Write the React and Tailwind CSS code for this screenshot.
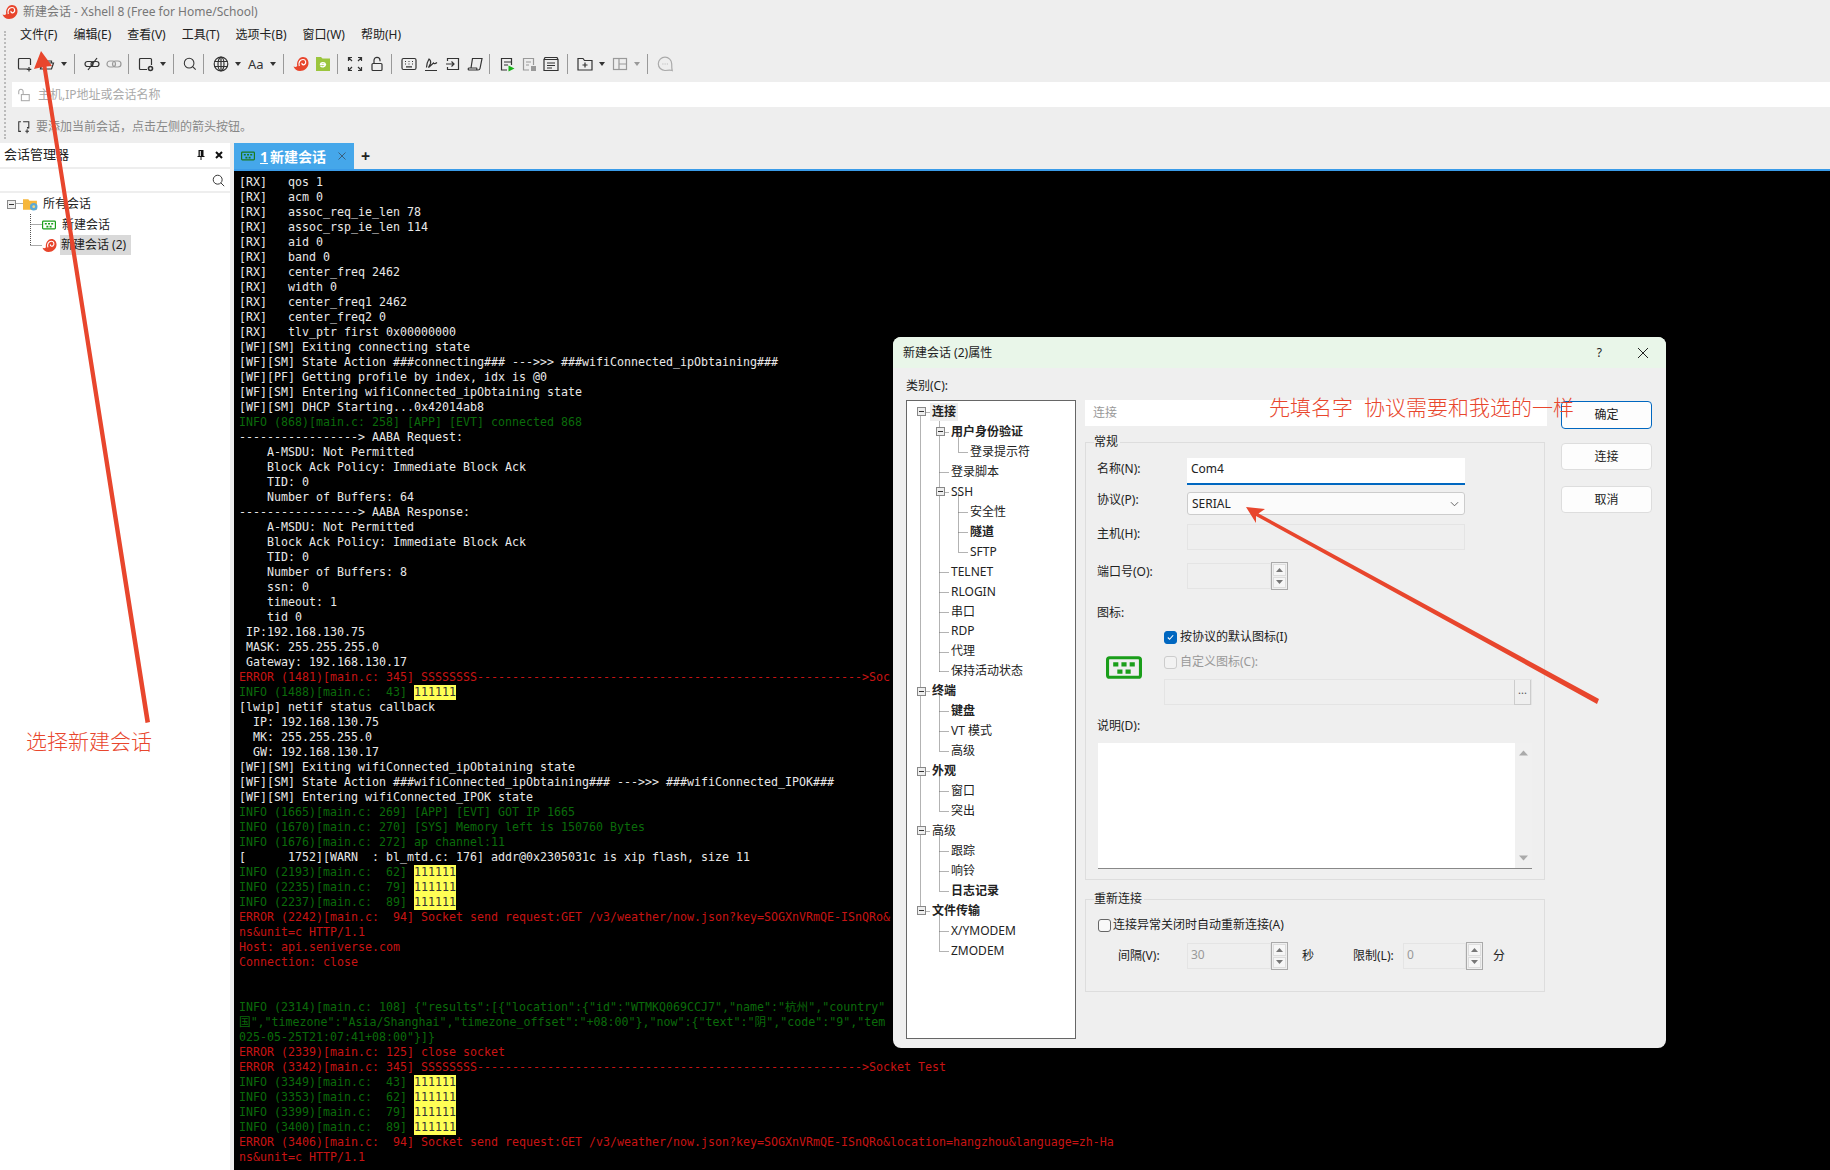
const S = ({ children, className = 'w-4 h-4' }) => (
  <svg viewBox="0 0 16 16" fill="none" stroke="#333" strokeWidth="1.2" className={className}>
    {children}
  </svg>
);

function Snail({ className = 'w-4 h-4' }) {
  return (
    <svg viewBox="0 0 16 16" className={className}>
      <path d="M.5 10.500c1.800.8 3 .4 3.700-.6C3.400 5.800 6 1 10 1c3.600 0 5.500 2.800 5.500 6 0 4.600-4 8-8.500 8-3.200 0-5.500-1.800-6.500-4.500z" fill="#e8452c" />
      <path d="M6.300 10C5 6.500 7.200 3.500 10 3.500c2.800 0 3.500 3.300 1.800 4.800-1.300 1.100-3.300.3-2.800-1.500" fill="none" stroke="#fff" strokeWidth="1.200" />
    </svg>
  );
}

function SessionIcon({ className = 'w-[14px] h-[10px]', color = '#1a9e1a' }) {
  return (
    <svg viewBox="0 0 35 22" className={className}>
      <rect x="1.500" y="1.500" width="32" height="19" rx="2" fill="none" stroke={color} strokeWidth="3" />
      <path d="M7 6h5v4H7zM15 6h5v4h-5zM23 6h5v4h-5zM11 13h5v4h-5zM19 13h5v4h-5z" fill={color} />
    </svg>
  );
}

const Caret = ({ muted }) => (
  <span className="w-[13px] flex">
    <svg viewBox="0 0 6 4" className="w-[6px] h-[4px]">
      <path d="M0 0h6L3 4z" fill={muted ? '#999' : '#333'} />
    </svg>
  </span>
);
const Sep = () => <span className="w-px h-5 mr-[9px] bg-[#999]" />;
const Slot = ({ children, className = 'w-[22px]' }) => <span className={`flex ${className}`}>{children}</span>;

function Toolbar() {
  return (
    <div className="h-[34px] flex items-center pl-[5px]">
      <Slot><S><path d="M11 13H2.500a1 1 0 0 1-1-1V3.500a1 1 0 0 1 1-1h10a1 1 0 0 1 1 1V9M12 11v4.500M9.800 13.300h4.500" /></S></Slot>
      <Slot><S><path d="M1.500 13V3.500h4l1.500 1.500h5.500v2M1.500 13l2-6h11l-2 6z" /></S></Slot>
      <Caret />
      <Sep />
      <Slot><S><rect x="1" y="5.500" width="8" height="5" rx="2.500" /><rect x="7" y="5.500" width="8" height="5" rx="2.500" /><path d="M4 14 13 2" /></S></Slot>
      <Slot><S><g stroke="#999"><rect x="1" y="5" width="8.500" height="6" rx="3" /><rect x="6.500" y="5" width="8.500" height="6" rx="3" /></g></S></Slot>
      <Sep />
      <Slot><S><path d="M9 13.500H2.500a1 1 0 0 1-1-1V3.500a1 1 0 0 1 1-1h10a1 1 0 0 1 1 1V9" /><circle cx="12.500" cy="12.500" r="2" strokeWidth="1.600" /></S></Slot>
      <Caret />
      <Sep />
      <Slot className="w-[20px]"><S className="w-[14px] h-[14px]"><circle cx="7" cy="7" r="5.500" /><path d="m11 11 3.500 3.500" /></S></Slot>
      <Sep />
      <Slot><S><circle cx="8" cy="8" r="6.800" /><ellipse cx="8" cy="8" rx="3" ry="6.800" /><path d="M1.500 5.500h13M1.500 10.500h13M8 1v14" /></S></Slot>
      <Caret />
      <Slot><span className="text-[13px] leading-none text-[#333]">Aa</span></Slot>
      <Caret />
      <Sep />
      <Slot><Snail /></Slot>
      <Slot>
        <svg viewBox="0 0 16 16" className="w-4 h-4">
          <path d="M1 1h5l1.500 1.500H15V15H1z" fill="#9bc53d" />
          <path d="M11 8.500H5.500c.3-2.500 4.500-2.500 5 0-.5 2.600-3.500 3-5 1.500" fill="none" stroke="#fff" strokeWidth="1.400" />
        </svg>
      </Slot>
      <Sep />
      <Slot><S><path d="M1.500 5V1.500H5M11 1.500h3.500V5M1.500 11v3.500H5M14.500 11v3.500H11M2 2l3 3M14 2l-3 3M2 14l3-3M14 14l-3-3" /></S></Slot>
      <Slot><S><rect x="3" y="7.500" width="10" height="7" rx="1" /><path d="M5 7.500V4.300a3 3 0 0 1 6 0v1" /></S></Slot>
      <Sep />
      <Slot><S><rect x="1" y="2.500" width="14" height="11" rx="1.500" /><path d="M4 5.500h1M7.500 5.500h1M11 5.500h1M4 8h1M7.500 8h1M11 8h1M5 10.800h6" /></S></Slot>
      <Slot><S><path d="M2 14.500h12M3.500 11.500c0-2 1-6 2.500-8.500 1.500 1 2 2.500 1.500 4.500l-2 4 5-4.500c.5 1 1.500 1 3.500-.5" /></S></Slot>
      <Slot><S><path d="M2.500 5V2.500h11v11h-11V11M1 8h8M6.500 5.500 9 8l-2.500 2.500" /></S></Slot>
      <Slot><S><path d="M4 12 5.500 2.500h9.500L13 12.500c-.2 1-1 1.500-2 1.500H2c-1 0-1.200-1.700 0-2h7.500c.5 0 .5 1.300 0 2M11.500 5.500" /></S></Slot>
      <Sep />
      <Slot>
        <S>
          <path d="M8 14H2.500V2.500h10V9M5 6h7M5 9h4" />
          <path d="M9.500 9.500v6l6-3z" fill="#19b319" stroke="none" />
        </S>
      </Slot>
      <Slot>
        <S>
          <g stroke="#999"><path d="M8 14H2.500V2.500h10V9M5 6h5M5 9h3" /></g>
          <rect x="10" y="10" width="5" height="5" fill="#999" stroke="none" />
        </S>
      </Slot>
      <Slot className="w-[24px]"><S><path d="M1 3.500h14v11H1zM1 3.500l1-2h12l1 2M4 7h8M4 9.500h8M4 12h5" /></S></Slot>
      <Sep />
      <Slot><S><path d="M1 14V2.500h5L7.500 4.500H15V14zM8 6.500v5M5.500 9h5" /></S></Slot>
      <Caret />
      <Slot><S><g stroke="#999"><rect x="1.500" y="2.500" width="13" height="11" /><path d="M7 2.500v11M7 8h7.500" /></g></S></Slot>
      <Caret muted />
      <Sep />
      <S>
        <g stroke="#aaa">
          <path d="M8 14.500a6.700 6.700 0 1 1 6.700-6.700c0 2 0 5 .5 6.700-1-.5-2.500-.5-7.200 0z" />
          <path d="M5.500 8h.8M7.700 8h.8M9.900 8h.8" />
        </g>
      </S>
    </div>
  );
}

function Chrome() {
  return (
    <>
      <div className="h-[23px] flex items-center pl-[2px] gap-[5px] text-[#777]">
        <Snail />
        <span>新建会话 - Xshell 8 (Free for Home/School)</span>
      </div>
      <div className="flex h-[120px]">
        <div className="w-[12px] pl-1 pt-[8px] pb-[4px]">
          <div className="h-full border-l-2 border-dotted border-[#bbb]" />
        </div>
        <div className="flex-1">
          <div className="h-[24px] flex items-center pl-2 gap-4 text-[#222]">
            <span>文件(F)</span>
            <span>编辑(E)</span>
            <span>查看(V)</span>
            <span>工具(T)</span>
            <span>选项卡(B)</span>
            <span>窗口(W)</span>
            <span>帮助(H)</span>
          </div>
          <Toolbar />
          <div className="mt-px h-[25px] bg-white flex items-center pl-[5px] gap-[7px] text-[#aaa]">
            <S className="w-[14px] h-[14px]">
              <g stroke="#aaa">
                <rect x="5" y="7.500" width="9" height="7" />
                <path d="M2 7V4a2.500 2.500 0 0 1 5 0v3.500" />
              </g>
            </S>
            <span>主机,IP地址或会话名称</span>
          </div>
          <div className="h-[36px] pt-[3px] flex items-center pl-[5px] gap-[5px] text-[#888]">
            <S className="w-[14px] h-[14px]">
              <path d="M4.500 2H2v11h2.500M7 2h6.500v7H12v-1M11.500 10.500v4.500M9.500 12.800h4.200" />
            </S>
            <span>要添加当前会话，点击左侧的箭头按钮。</span>
          </div>
        </div>
      </div>
    </>
  );
}

function SessionPanel() {
  return (
    <aside className="w-[230px] bg-white text-[#222]">
      <div className="h-[26px] flex items-center justify-between pl-1 pr-[7px] border-b-2 border-[#eee]">
        <span className="text-[13px]">会话管理器</span>
        <span className="flex gap-[10px] items-center">
          <svg viewBox="0 0 8 10" className="w-2 h-[10px]"><path d="M1.500 0h5v6h1v1H4.500v3h-1V7H.5V6h1zM2.800 1v5h1V1z" fill="#111" /></svg>
          <svg viewBox="0 0 8 8" className="w-2 h-2"><path d="M1 1l6 6M7 1 1 7" stroke="#111" strokeWidth="2" /></svg>
        </span>
      </div>
      <div className="h-[24px] flex items-center justify-end pr-[5px] border-b-2 border-[#eee]">
        <S className="w-[13px] h-[13px]"><circle cx="7" cy="7" r="5.500" /><path d="m11 11 4 4" /></S>
      </div>
      <div className="relative pt-px">
        <svg className="absolute left-0 top-0 w-[60px] h-[70px]" fill="none" stroke="#555" strokeDasharray="1 1">
          <path d="M16.500 10.500h7M30.500 21v31.500M30.500 31.500h12M30.500 52.500h12" />
        </svg>
        <div className="relative h-[20px] flex items-center pl-[7px]">
          <span className="w-[9px] h-[9px] border border-[#888] bg-[#eee] flex items-center justify-center">
            <span className="w-[5px] h-px bg-[#333]" />
          </span>
          <svg viewBox="0 0 14 12" className="w-[15px] h-[13px] ml-[7px]">
            <path d="M0 1h5l1 1.500h7V11H0z" fill="#f6b73c" />
            <circle cx="10" cy="8" r="3.500" fill="#5aa9d6" />
            <circle cx="10" cy="8" r="1.300" fill="#f6d77c" />
          </svg>
          <span className="ml-[5px]">所有会话</span>
        </div>
        <div className="relative h-[21px] flex items-center pl-[42px]">
          <SessionIcon />
          <span className="ml-[6px]">新建会话</span>
        </div>
        <div className="relative h-[20px] flex items-center pl-[42px]">
          <Snail className="w-[15px] h-[15px]" />
          <span className="ml-[3px] bg-[#d9d9d9] h-[20px] w-[71px] pl-px flex items-center">新建会话 (2)</span>
        </div>
      </div>
    </aside>
  );
}

const dashes = '-'.repeat(55);
const W = 'w';
const G = 'g';
const R = 'r';

const LINES = [
  [W, '[RX]   qos 1'],
  [W, '[RX]   acm 0'],
  [W, '[RX]   assoc_req_ie_len 78'],
  [W, '[RX]   assoc_rsp_ie_len 114'],
  [W, '[RX]   aid 0'],
  [W, '[RX]   band 0'],
  [W, '[RX]   center_freq 2462'],
  [W, '[RX]   width 0'],
  [W, '[RX]   center_freq1 2462'],
  [W, '[RX]   center_freq2 0'],
  [W, '[RX]   tlv_ptr first 0x00000000'],
  [W, '[WF][SM] Exiting connecting state'],
  [W, '[WF][SM] State Action ###connecting### --->>> ###wifiConnected_ipObtaining###'],
  [W, '[WF][PF] Getting profile by index, idx is @0'],
  [W, '[WF][SM] Entering wifiConnected_ipObtaining state'],
  [W, '[WF][SM] DHCP Starting...0x42014ab8'],
  [G, 'INFO (868)[main.c: 258] [APP] [EVT] connected 868'],
  [W, '-----------------> AABA Request:'],
  [W, '    A-MSDU: Not Permitted'],
  [W, '    Block Ack Policy: Immediate Block Ack'],
  [W, '    TID: 0'],
  [W, '    Number of Buffers: 64'],
  [W, '-----------------> AABA Response:'],
  [W, '    A-MSDU: Not Permitted'],
  [W, '    Block Ack Policy: Immediate Block Ack'],
  [W, '    TID: 0'],
  [W, '    Number of Buffers: 8'],
  [W, '    ssn: 0'],
  [W, '    timeout: 1'],
  [W, '    tid 0'],
  [W, ' IP:192.168.130.75'],
  [W, ' MASK: 255.255.255.0'],
  [W, ' Gateway: 192.168.130.17'],
  [R, `ERROR (1481)[main.c: 345] SSSSSSSS${dashes}>Soc`],
  [G, 'INFO (1488)[main.c:  43] ', '111111'],
  [W, '[lwip] netif status callback'],
  [W, '  IP: 192.168.130.75'],
  [W, '  MK: 255.255.255.0'],
  [W, '  GW: 192.168.130.17'],
  [W, '[WF][SM] Exiting wifiConnected_ipObtaining state'],
  [W, '[WF][SM] State Action ###wifiConnected_ipObtaining### --->>> ###wifiConnected_IPOK###'],
  [W, '[WF][SM] Entering wifiConnected_IPOK state'],
  [G, 'INFO (1665)[main.c: 269] [APP] [EVT] GOT IP 1665'],
  [G, 'INFO (1670)[main.c: 270] [SYS] Memory left is 150760 Bytes'],
  [G, 'INFO (1676)[main.c: 272] ap channel:11'],
  [W, '[      1752][WARN  : bl_mtd.c: 176] addr@0x2305031c is xip flash, size 11'],
  [G, 'INFO (2193)[main.c:  62] ', '111111'],
  [G, 'INFO (2235)[main.c:  79] ', '111111'],
  [G, 'INFO (2237)[main.c:  89] ', '111111'],
  [R, 'ERROR (2242)[main.c:  94] Socket send request:GET /v3/weather/now.json?key=SOGXnVRmQE-ISnQRo&'],
  [R, 'ns&unit=c HTTP/1.1'],
  [R, 'Host: api.seniverse.com'],
  [R, 'Connection: close'],
  [W, ' '],
  [W, ' '],
  [G, 'INFO (2314)[main.c: 108] {"results":[{"location":{"id":"WTMKQ069CCJ7","name":"杭州","country"'],
  [G, '国","timezone":"Asia/Shanghai","timezone_offset":"+08:00"},"now":{"text":"阴","code":"9","tem'],
  [G, '025-05-25T21:07:41+08:00"}]}'],
  [R, 'ERROR (2339)[main.c: 125] close socket'],
  [R, `ERROR (3342)[main.c: 345] SSSSSSSS${dashes}>Socket Test`],
  [G, 'INFO (3349)[main.c:  43] ', '111111'],
  [G, 'INFO (3353)[main.c:  62] ', '111111'],
  [G, 'INFO (3399)[main.c:  79] ', '111111'],
  [G, 'INFO (3400)[main.c:  89] ', '111111'],
  [R, 'ERROR (3406)[main.c:  94] Socket send request:GET /v3/weather/now.json?key=SOGXnVRmQE-ISnQRo&location=hangzhou&language=zh-Ha'],
  [R, 'ns&unit=c HTTP/1.1'],
];

const LINE_COLOR = { w: 'text-[#e8e8e8]', g: 'text-[#0b6b0b]', r: 'text-[#c81414]' };

function Terminal() {
  return (
    <div className="flex-1 bg-black pt-[4px] pl-[5px] overflow-hidden whitespace-pre text-[11.630px] leading-[15px] font-['DejaVu_Sans_Mono','Noto_Sans_CJK_SC',monospace]">
      {LINES.map(([c, text, hl], i) => (
        <div key={i} className={`h-[15px] ${LINE_COLOR[c]}`}>
          {text}
          {hl && <span className="inline-block h-[15px] bg-[#ffff55] text-[#333]">{hl}</span>}
        </div>
      ))}
    </div>
  );
}

function TabArea() {
  return (
    <div className="flex-1 flex flex-col min-w-0">
      <div className="h-[26px] flex items-center">
        <div className="w-[120px] h-full bg-[#45a7ea] flex items-center pl-[7px] text-white">
          <SessionIcon color="#1c7a1c" />
          <span className="ml-[5px] text-[14px] font-bold underline">1</span>
          <span className="ml-[2px] text-[14px] font-bold">新建会话</span>
          <svg viewBox="0 0 8 8" className="w-2 h-2 ml-[12px]"><path d="m.5.5 7 7M7.500.5l-7 7" stroke="#39607e" /></svg>
        </div>
        <span className="ml-[7px] text-[16px] font-bold text-[#222]">+</span>
      </div>
      <div className="h-[2px] bg-[#3a9be8]" />
      <Terminal />
    </div>
  );
}

const TREE = [
  ['连接', 0, true, true, true],
  ['用户身份验证', 1, true, true],
  ['登录提示符', 2],
  ['登录脚本', 1],
  ['SSH', 1, false, true],
  ['安全性', 2],
  ['隧道', 2, true],
  ['SFTP', 2],
  ['TELNET', 1],
  ['RLOGIN', 1],
  ['串口', 1],
  ['RDP', 1],
  ['代理', 1],
  ['保持活动状态', 1],
  ['终端', 0, true, true],
  ['键盘', 1, true],
  ['VT 模式', 1],
  ['高级', 1],
  ['外观', 0, true, true],
  ['窗口', 1],
  ['突出', 1],
  ['高级', 0, false, true],
  ['跟踪', 1],
  ['响铃', 1],
  ['日志记录', 1, true],
  ['文件传输', 0, true, true],
  ['X/YMODEM', 1],
  ['ZMODEM', 1],
];

const INDENT = ['pl-[10px]', 'pl-[29px]', 'pl-[48px]'];

function treeLines() {
  const X = [13.5, 32.5, 51.5];
  const y = (i) => Math.round(11 + i * 19.96) + 0.5;
  let d = '';
  TREE.forEach(([, level], i) => {
    d += `M${X[level]} ${y(i)}h9`;
    for (let j = i - 1; j >= 0; j--) {
      if (TREE[j][1] <= level) {
        d += `M${X[level]} ${y(j)}V${y(i)}`;
        break;
      }
    }
  });
  return d;
}

function Tree() {
  return (
    <div className="relative mt-[6px] w-[170px] h-[639px] bg-white border border-[#666] pt-px text-[#222]">
      <svg className="absolute inset-0 w-full h-full" fill="none" stroke="#666" strokeDasharray="1 1">
        <path d={treeLines()} />
      </svg>
      {TREE.map(([label, level, bold, box, selected], i) => (
        <div key={i} className={`relative h-[19.960px] flex items-center ${INDENT[level]}`}>
          <span className="w-[9px] h-[9px] shrink-0">
            {box && (
              <span className="w-[9px] h-[9px] border border-[#888] bg-[#eee] flex items-center justify-center">
                <span className="w-[5px] h-px bg-[#333]" />
              </span>
            )}
          </span>
          <span className={`leading-[18px] ${bold ? 'font-bold' : ''} ${selected ? 'ml-[4px] px-[2px] bg-[#eee]' : 'ml-[6px]'}`}>{label}</span>
        </div>
      ))}
    </div>
  );
}

const Label = ({ children, className = 'w-[90px] pb-[6px]' }) => (
  <span className={`text-[#222] ${className}`}>{children}</span>
);

const Tri = ({ down, className = 'w-[7px] h-[4px]', color = '#777' }) => (
  <svg viewBox="0 0 7 4" className={className}>
    <path d={down ? 'M0 0h7L3.500 4z' : 'M0 4h7L3.500 0z'} fill={color} />
  </svg>
);

function Spinner({ value, className }) {
  return (
    <div className="flex items-center">
      <div className={`h-[26px] border border-[#e4e4e4] flex items-center pl-[3px] pb-[2px] text-[#999] ${className}`}>{value}</div>
      <div className="w-[17px] h-[28px] border border-[#aaa] p-px flex flex-col gap-px">
        <div className="flex-1 bg-[#f6f6f6] border border-[#ddd] flex items-center justify-center"><Tri /></div>
        <div className="flex-1 bg-[#f6f6f6] border border-[#ddd] flex items-center justify-center"><Tri down /></div>
      </div>
    </div>
  );
}

function Box({ checked, muted }) {
  return (
    <span className={`w-[13px] h-[13px] rounded-[3px] border flex items-center justify-center shrink-0 ${checked ? 'bg-[#0067c0] border-[#0067c0]' : muted ? 'bg-[#f2f2f2] border-[#ccc]' : 'bg-[#f8f8f8] border-[#666]'}`}>
      {checked && (
        <svg viewBox="0 0 10 10" className="w-[9px] h-[9px]"><path d="m2 5 2 2 4-4.500" fill="none" stroke="#fff" strokeWidth="1.200" /></svg>
      )}
    </span>
  );
}

const Legend = ({ children }) => (
  <span className="absolute -top-[9px] left-[8px] bg-[#efefef] pr-[2px] leading-[16px] text-[#222]">{children}</span>
);

function GeneralGroup() {
  return (
    <div className="relative mt-4 w-[460px] h-[438px] border border-[#ddd] pl-[11px]">
      <Legend>常规</Legend>
      <div className="mt-[15px] h-[27px] flex items-center">
        <Label>名称(N):</Label>
        <div className="w-[278px] h-full bg-white border-b-2 border-[#0067c0] flex items-center pl-1 pb-[4px] text-[#222]">Com4</div>
      </div>
      <div className="mt-[7px] h-[23px] flex items-center">
        <Label className="w-[90px] pb-[8px]">协议(P):</Label>
        <div className="w-[278px] h-full bg-[#fbfbfb] border border-[#ccc] rounded-[3px] flex items-center justify-between pl-1 pr-[5px] text-[#222]">
          SERIAL
          <svg viewBox="0 0 10 6" className="w-[9px] h-[6px]"><path d="m1 1 4 4 4-4" fill="none" stroke="#555" /></svg>
        </div>
      </div>
      <div className="mt-[9px] h-[26px] flex items-center">
        <Label>主机(H):</Label>
        <div className="w-[278px] h-full border border-[#e4e4e4]" />
      </div>
      <div className="mt-[13px] h-[26px] flex items-center">
        <Label className="w-[90px] pb-[8px]">端口号(O):</Label>
        <Spinner className="w-[84px]" />
      </div>
      <div className="mt-4 h-4 leading-4 text-[#222]">图标:</div>
      <div className="mt-2 flex">
        <div className="w-[67px] pl-[9px] pt-[27px]">
          <SessionIcon className="w-[36px] h-[23px]" />
        </div>
        <div>
          <div className="h-4 flex items-center gap-[3px] text-[#222]">
            <Box checked />
            按协议的默认图标(I)
          </div>
          <div className="mt-[9px] h-4 flex items-center gap-[3px] text-[#999]">
            <Box muted />
            自定义图标(C):
          </div>
          <div className="mt-[9px] w-[368px] h-[26px] border border-[#e4e4e4] flex justify-end">
            <div className="w-[17px] h-[25px] border border-[#ccc] border-t-0 flex items-center justify-center text-[#555] text-[11px] pb-1">...</div>
          </div>
        </div>
      </div>
      <div className="mt-[13px] h-4 leading-4 text-[#222]">说明(D):</div>
      <div className="mt-[9px] ml-px w-[434px] h-[126px] bg-white border-b border-[#888] flex justify-end">
        <div className="w-[17px] bg-[#f0f0f0] flex flex-col items-center justify-between py-[7px]">
          <Tri className="w-[9px] h-[6px]" color="#aaa" />
          <Tri down className="w-[9px] h-[6px]" color="#aaa" />
        </div>
      </div>
    </div>
  );
}

function ReconnectGroup() {
  return (
    <div className="relative mt-[19px] w-[460px] h-[93px] border border-[#ddd]">
      <Legend>重新连接</Legend>
      <div className="mt-[17px] ml-3 h-4 flex items-center gap-[2px] text-[#222]">
        <Box />
        连接异常关闭时自动重新连接(A)
      </div>
      <div className="mt-[10px] pl-8 h-[26px] flex items-center text-[#222]">
        <span className="w-[69px]">间隔(V):</span>
        <Spinner value="30" className="w-[84px]" />
        <span className="ml-[14px]">秒</span>
        <span className="ml-[39px] w-[50px]">限制(L):</span>
        <Spinner value="0" className="w-[63px]" />
        <span className="ml-[10px]">分</span>
      </div>
    </div>
  );
}

function Dialog() {
  return (
    <div className="absolute left-[893px] top-[337px] w-[773px] h-[711px] rounded-lg overflow-hidden bg-[#efefef] flex flex-col shadow-[0_0_4px_rgba(0,0,0,0.5)]">
      <div className="h-[31px] bg-[#e9f6e9] flex items-center pl-[10px] text-[#222]">
        <span className="flex-1">新建会话 (2)属性</span>
        <span className="text-[#222] mr-[35px]">?</span>
        <svg viewBox="0 0 12 12" className="w-3 h-3 mr-[17px]"><path d="m1 1 10 10M11 1 1 11" stroke="#222" /></svg>
      </div>
      <div className="flex flex-1">
        <div className="ml-[13px] mt-[10px]">
          <div className="h-4 leading-4 text-[#222]">类别(C):</div>
          <Tree />
        </div>
        <div className="ml-[9px] mt-8 w-[462px]">
          <div className="h-[26px] bg-white pl-2 flex items-center text-[#999]">连接</div>
          <GeneralGroup />
          <ReconnectGroup />
        </div>
        <div className="ml-[14px] mt-[33px] w-[91px] text-[#222]">
          <div className="h-7 rounded bg-[#fdfdfd] border border-[#0067c0] flex items-center justify-center">确定</div>
          <div className="mt-[14px] h-[27px] rounded bg-[#fdfdfd] border border-[#ddd] flex items-center justify-center">连接</div>
          <div className="mt-4 h-[27px] rounded bg-[#fdfdfd] border border-[#ddd] flex items-center justify-center">取消</div>
        </div>
      </div>
    </div>
  );
}

function Annotations() {
  return (
    <>
      <svg className="absolute inset-0 w-[1830px] h-[1170px] pointer-events-none" fill="#e8462d">
        <path d="M41 51 52 66 46.500 66.500 150 722 145.500 723 42.500 67 34 69z" />
        <path d="M1246 507 1265 509 1258.500 513.500 1599 699 1597 704 1256 516 1256 523z" />
      </svg>
      <span className="absolute left-[26px] top-[725px] text-[21px] leading-[32px] text-[#e8462d] font-light">选择新建会话</span>
      <span className="absolute left-[1269px] top-[391px] text-[21px] leading-[32px] text-[#e8462d] font-light whitespace-pre">先填名字  协议需要和我选的一样</span>
    </>
  );
}

export default function App() {
  return (
    <div className="relative w-[1830px] h-[1170px] overflow-hidden bg-[#eee] flex flex-col text-[12px] font-['Noto_Sans','Noto_Sans_CJK_SC',sans-serif]">
      <Chrome />
      <div className="flex flex-1 min-h-0">
        <SessionPanel />
        <div className="w-[4px]" />
        <TabArea />
      </div>
      <Dialog />
      <Annotations />
    </div>
  );
}
